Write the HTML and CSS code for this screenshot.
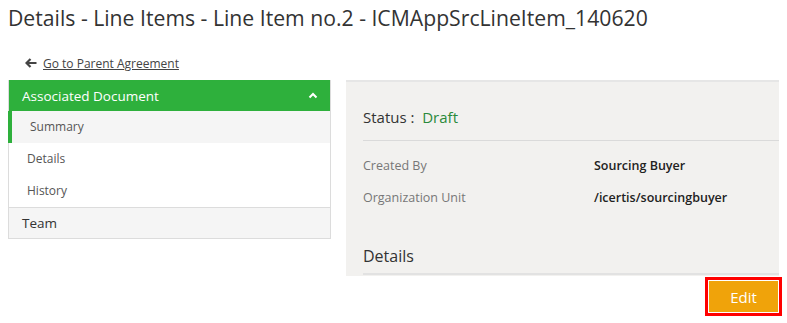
FILE: index.html
```html
<!DOCTYPE html>
<html lang="en">
  <head>
    <meta charset="UTF-8" />
    <title>Details - Line Items</title>
    <link rel="stylesheet" href="styles.css">
  </head>
  <body>
    <h1 class="page-title">Details - Line Items - Line Item no.2 - ICMAppSrcLineItem_140620</h1>

    <div class="back-link">
      <svg class="back-arrow" width="12" height="10" viewBox="0 0 12 10">
        <path d="M5.5 1 L1.5 5 L5.5 9 M1.5 5 H11.5" fill="none" stroke="#444" stroke-width="2.2" />
      </svg>
      <a href="#">Go to Parent Agreement</a>
    </div>

    <div class="layout">
      <!-- Side navigation -->
      <div class="side-nav">
        <div class="nav-group">
          <span>Associated Document</span>
          <svg class="chevron" width="10" height="7" viewBox="0 0 10 7">
            <path d="M1.5 5.5 L5 2 L8.5 5.5" fill="none" stroke="#fff" stroke-width="2" />
          </svg>
        </div>
        <div class="nav-item active">Summary</div>
        <div class="nav-item">Details</div>
        <div class="nav-item">History</div>
        <div class="nav-group closed">Team</div>
      </div>

      <!-- Main content -->
      <div class="main">
        <div class="content">
          <div class="status">Status :&nbsp; <span class="status-value">Draft</span></div>
          <div class="fields">
            <div class="field">
              <span class="field-label">Created By</span>
              <span class="field-value">Sourcing Buyer</span>
            </div>
            <div class="field">
              <span class="field-label">Organization Unit</span>
              <span class="field-value">/icertis/sourcingbuyer</span>
            </div>
          </div>
          <div class="section-title">Details</div>
        </div>
        <div class="actions">
          <button class="edit-btn">Edit</button>
        </div>
      </div>
    </div>
  </body>
</html>
```

FILE: styles.css
```css
body {
  margin: 0;
  padding: 0 8px;
  font-family: "Open Sans", "Noto Sans", Arial, sans-serif;
  color: #333;
  background-color: white;
  overflow: hidden;
}

.page-title {
  margin: 0;
  padding-top: 3px;
  font-size: 21.2px;
  font-weight: normal;
  color: #333;
  line-height: 30px;
}

.back-link {
  display: flex;
  align-items: center;
  gap: 6px;
  margin-top: 21px;
  padding-left: 17px;
  height: 18px;
  font-size: 12px;
}

.back-link a {
  color: #444;
  text-decoration: underline;
}

.layout {
  display: flex;
  align-items: flex-start;
  gap: 15px;
  margin-top: 8px;
}

.side-nav {
  width: 321px;
  border: 1px solid #dcdcdc;
  border-top: none;
  flex-shrink: 0;
}

.nav-group {
  display: flex;
  justify-content: space-between;
  align-items: center;
  height: 31px;
  padding: 0 12px 0 13px;
  background-color: #2eb03c;
  color: white;
  font-size: 13.5px;
}

.nav-group.closed {
  background-color: #f5f5f5;
  color: #333;
  border-top: 1px solid #dcdcdc;
  height: 30px;
}

.nav-item {
  height: 32px;
  line-height: 32px;
  padding-left: 18px;
  font-size: 12px;
  color: #555;
}

.nav-item.active {
  background-color: #f5f5f5;
  border-left: 4px solid #2eb03c;
  padding-left: 18px;
  margin-left: -1px;
}

.main {
  flex: 1;
  display: flex;
  flex-direction: column;
}

.content {
  width: 433px;
  background-color: #f2f1ef;
  border-top: 2px solid #e6e6e6;
  padding: 0 0 0 17px;
  box-sizing: border-box;
  height: 196px;
}

.status {
  font-size: 15px;
  line-height: 20px;
  padding: 25px 0 13px;
  border-bottom: 1px solid #dadada;
}

.status-value {
  color: #2a8a3b;
}

.fields {
  padding-top: 9px;
}

.field {
  display: flex;
  height: 32px;
  line-height: 32px;
  font-size: 12.5px;
}

.field-label {
  width: 231px;
  color: #777;
}

.field-value {
  color: #222;
  font-weight: 600;
}

.section-title {
  margin-top: 30px;
  font-size: 16px;
  line-height: 24px;
  padding-bottom: 5px;
  border-bottom: 2px solid #e2e2e2;
}

.actions {
  display: flex;
  justify-content: flex-end;
  width: 436px;
  padding-top: 1px;
}

.edit-btn {
  width: 77px;
  height: 39px;
  border: 3px solid #f00;
  padding: 1px;
  background-color: #f0a30a;
  background-clip: content-box;
  color: white;
  font-family: "Open Sans", "Noto Sans", Arial, sans-serif;
  font-size: 15px;
  cursor: pointer;
}
```
